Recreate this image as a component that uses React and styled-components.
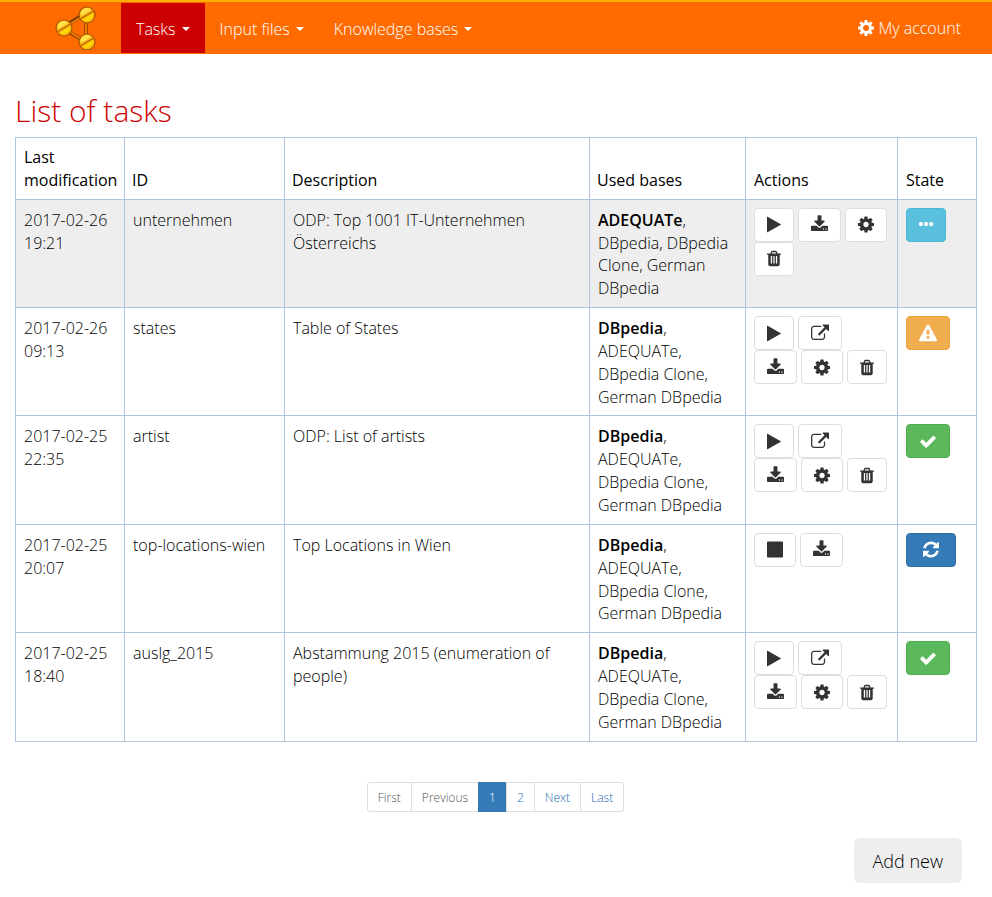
import React from "react";
import styled, { createGlobalStyle } from "styled-components";

const GlobalStyle = createGlobalStyle`
  *, *::before, *::after { box-sizing: border-box; }
  body {
    margin: 0;
    background: #fff;
    color: #000;
    font-family: "Open Sans", "Noto Sans", sans-serif;
    font-size: 16px;
    font-weight: 300;
    line-height: 1.428571;
  }
`;

/* Glyph drawings on a 1792-unit em square; `em` is the glyph's advance width. */
const ICONS = {
  play: {
    em: 1408,
    width: 14,
    d: "M1576 927l-1328 738q-23 13-39.5 3t-16.5-36v-1472q0-26 16.5-36t39.5 3l1328 738q23 13 23 31t-23 31z",
  },
  stop: {
    em: 1536,
    width: 16,
    d: "M1664 192v1408q0 26-19 45t-45 19h-1408q-26 0-45-19t-19-45v-1408q0-26 19-45t45-19h1408q26 0 45 19t19 45z",
  },
  download: {
    em: 1664,
    width: 17,
    d: "M1344 1344q0-26-19-45t-45-19-45 19-19 45 19 45 45 19 45-19 19-45zm256 0q0-26-19-45t-45-19-45 19-19 45 19 45 45 19 45-19 19-45zm128-224v320q0 40-28 68t-68 28h-1472q-40 0-68-28t-28-68v-320q0-40 28-68t68-28h465l135 136q58 56 136 56t136-56l136-136h464q40 0 68 28t28 68zm-325-569q17 41-14 70l-448 448q-18 19-45 19t-45-19l-448-448q-31-29-14-70 17-39 59-39h256v-448q0-26 19-45t45-19h256q26 0 45 19t19 45v448h256q42 0 59 39z",
  },
  cog: {
    em: 1536,
    width: 16,
    d: "M1152 896q0-106-75-181t-181-75-181 75-75 181 75 181 181 75 181-75 75-181zm512-109v222q0 12-8 23t-20 13l-185 28q-19 54-39 91 35 50 107 138 10 12 10 25t-9 23q-27 37-99 108t-94 71q-12 0-26-9l-138-108q-44 23-91 38-16 136-29 186-7 28-36 28h-222q-14 0-24.5-8.5t-11.5-21.5l-28-184q-49-16-90-37l-141 107q-10 9-25 9-14 0-25-11-126-114-165-168-7-10-7-23 0-12 8-23 15-21 51-66.5t54-70.5q-27-50-41-99l-183-27q-13-2-21-12.5t-8-23.5v-222q0-12 8-23t19-13l186-28q14-46 39-92-40-57-107-138-10-12-10-24 0-10 9-23 26-36 98.5-107.5t94.5-71.5q13 0 26 10l138 107q44-23 91-38 16-136 29-186 7-28 36-28h222q14 0 24.5 8.5t11.5 21.5l28 184q49 16 90 37l142-107q9-9 24-9 13 0 25 10 129 119 165 170 7 8 7 22 0 12-8 23-15 21-51 66.5t-54 70.5q26 50 41 98l183 28q13 2 21 12.5t8 23.5z",
  },
  trash: {
    em: 1408,
    width: 14,
    d: "M704 1376v-704q0-14-9-23t-23-9h-64q-14 0-23 9t-9 23v704q0 14 9 23t23 9h64q14 0 23-9t9-23zm256 0v-704q0-14-9-23t-23-9h-64q-14 0-23 9t-9 23v704q0 14 9 23t23 9h64q14 0 23-9t9-23zm256 0v-704q0-14-9-23t-23-9h-64q-14 0-23 9t-9 23v704q0 14 9 23t23 9h64q14 0 23-9t9-23zm-544-992h448l-48-117q-7-9-17-11h-317q-10 2-17 11zm928 32v64q0 14-9 23t-23 9h-96v948q0 83-47 143.5t-113 60.5h-832q-66 0-113-58.5t-47-141.5v-952h-96q-14 0-23-9t-9-23v-64q0-14 9-23t23-9h309l70-167q15-37 54-63t79-26h320q40 0 79 26t54 63l70 167h309q14 0 23 9t9 23z",
  },
  external: {
    em: 1792,
    width: 18,
    d: "M1408 928v320q0 119-84.5 203.5t-203.5 84.5h-832q-119 0-203.5-84.5t-84.5-203.5v-832q0-119 84.5-203.5t203.5-84.5h704q14 0 23 9t9 23v64q0 14-9 23t-23 9h-704q-66 0-113 47t-47 113v832q0 66 47 113t113 47h832q66 0 113-47t47-113v-320q0-14 9-23t23-9h64q14 0 23 9t9 23zm384-864v512q0 26-19 45t-45 19-45-19l-176-176-652 652q-10 10-23 10t-23-10l-114-114q-10-10-10-23t10-23l652-652-176-176q-19-19-19-45t19-45 45-19h512q26 0 45 19t19 45z",
  },
  ellipsis: {
    em: 1408,
    width: 14,
    d: "M576 800v96q0 100-60 134t-132 34-132-34-60-134v-96q0-90 60-124t132-34 132 34 60 124zm512 0v96q0 100-60 134t-132 34-132-34-60-134v-96q0-90 60-124t132-34 132 34 60 124zm512 0v96q0 100-60 134t-132 34-132-34-60-134v-96q0-90 60-124t132-34 132 34 60 124z",
  },
  warning: {
    em: 1792,
    width: 18,
    d: "M1024 1375v-190q0-14-9.5-23.5t-22.5-9.5h-192q-13 0-22.5 9.5t-9.5 23.5v190q0 14 9.5 23.5t22.5 9.5h192q13 0 22.5-9.5t9.5-23.5zm-2-374l18-459q0-12-10-19-13-11-24-11h-220q-11 0-24 11-10 7-10 21l17 457q0 10 10 16.5t24 6.5h185q14 0 23.5-6.5t10.5-16.5zm-14-934l768 1408q35 63-2 126-17 29-46.5 46t-63.5 17h-1536q-34 0-63.5-17t-46.5-46q-37-63-2-126l768-1408q17-31 47-49t65-18 65 18 47 49z",
  },
  check: {
    em: 1792,
    width: 18,
    d: "M1671 566q0 40-28 68l-724 724-136 136q-28 28-68 28t-68-28l-136-136-362-362q-28-28-28-68t28-68l136-136q28-28 68-28t68 28l294 295 656-657q28-28 68-28t68 28l136 136q28 28 28 68z",
  },
  refresh: {
    em: 2304,
    width: 24,
    d: "M1639 1056q0 5-1 7-64 268-268 434.5t-478 166.5q-146 0-282.5-55t-243.5-157l-129 129q-19 19-45 19t-45-19-19-45v-448q0-26 19-45t45-19h448q26 0 45 19t19 45-19 45l-137 137q71 66 161 102t187 36q134 0 250-65t186-179q11-17 53-117 8-23 30-23h192q13 0 22.5 9.5t9.5 22.5zm25-800v448q0 26-19 45t-45 19h-448q-26 0-45-19t-19-45 19-45l138-138q-148-137-349-137-134 0-250 65t-186 179q-11 17-53 117-8 23-30 23h-199q-13 0-22.5-9.5t-9.5-22.5v-7q65-268 270-434.5t480-166.5q146 0 284 55.5t245 156.5l130-129q19-19 45-19t45 19 19 45z",
  },
};

function Icon({ name }) {
  const { em, width, d } = ICONS[name];
  return (
    <svg
      width={width}
      height="19"
      viewBox={`${(1792 - em) / 2} 0 ${em} 1792`}
      fill="currentColor"
      overflow="visible"
      aria-hidden="true"
    >
      <path d={d} />
    </svg>
  );
}

const Navbar = styled.header`
  display: flex;
  align-items: flex-start;
  min-height: 54px;
  padding: 1px 16px 1px 55px;
  border-top: 2px solid #ffae00;
  background: #ff6b00;
`;

const Brand = styled.a`
  display: flex;
  margin: 2px 24px 0 0;
`;

const Menu = styled.nav`
  display: flex;
  flex: 1;
`;

const MenuButton = styled.button`
  display: flex;
  align-items: center;
  gap: 6px;
  height: 50px;
  padding: 2px 15px 0;
  border: 0;
  background: ${(p) => (p.$active ? "#c00" : "transparent")};
  color: #fff;
  font: inherit;
  cursor: pointer;
`;

const Caret = styled.span`
  border-top: 4px solid;
  border-right: 4px solid transparent;
  border-left: 4px solid transparent;
`;

const AccountLink = styled.a`
  display: flex;
  align-items: center;
  gap: 4px;
  height: 50px;
  padding: 0 15px;
  color: #fff;
  text-decoration: none;
`;

const Page = styled.main`
  padding: 40px 15px 14px;
`;

const Title = styled.h1`
  margin: 0 0 9px;
  color: #c00;
  font-size: 30px;
  font-weight: 300;
  line-height: 34px;
`;

const Table = styled.table`
  width: 100%;
  border-collapse: collapse;
  table-layout: fixed;
`;

const Col = styled.col`
  width: ${(p) => p.$width};
`;

const HeadCell = styled.th`
  padding: 8px 7px 7px;
  border: 1px solid #b0c4de;
  font-weight: 500;
  text-align: left;
  vertical-align: bottom;

  &:first-child,
  &:nth-child(n + 5) { padding-left: 8px; }
`;

const Row = styled.tr`
  background: ${(p) => (p.$highlighted ? "#eee" : "#fff")};
`;

const Cell = styled.td`
  padding: ${(p) => (p.$controls ? "8px" : "9px 8px 8px")};
  border: 1px solid #b0c4de;
  vertical-align: top;
  line-height: ${(p) => (p.$controls ? "20px" : "inherit")};
`;

const TextCell = styled(Cell)`
  padding: 9px 8px 7px;
`;

const MainBase = styled.strong`
  font-weight: 600;
`;

const ActionList = styled.div`
  display: flex;
  flex-wrap: wrap;
  column-gap: 4px;
  padding-right: 2px;
`;

const IconButton = styled.button`
  display: flex;
  align-items: center;
  height: 34px;
  padding: 0 12px;
  border: 1px solid ${(p) => p.$border || "#ddd"};
  border-radius: 4px;
  background: ${(p) => p.$fill || "#fff"};
  color: ${(p) => (p.$fill ? "#fff" : "#333")};
  cursor: pointer;
`;

const Pagination = styled.nav`
  display: flex;
  justify-content: center;
  margin-top: 40px;
`;

const PageLink = styled.a`
  height: 30px;
  margin-left: -1px;
  padding: 5px 10px;
  border: 1px solid ${(p) => (p.$active ? "#337ab7" : "#ddd")};
  background: ${(p) => (p.$active ? "#337ab7" : "#fff")};
  color: ${(p) => (p.$active ? "#fff" : p.$muted ? "#555" : "#1f6cb0")};
  font-size: 12px;
  line-height: 20px;
  text-decoration: none;

  &:first-child { border-radius: 3px 0 0 3px; }
  &:last-child { border-radius: 0 3px 3px 0; }
`;

const Footer = styled.div`
  display: flex;
  justify-content: flex-end;
  margin-top: 26px;
  padding-right: 15px;
`;

const AddButton = styled.button`
  height: 45px;
  padding: 3px 19px 0;
  border: 0;
  border-radius: 6px;
  background: #eee;
  color: #000;
  font: inherit;
  font-size: 18px;
  cursor: pointer;
`;

function Ball({ cx, cy }) {
  return (
    <g>
      <circle cx={cx} cy={cy} r="8" fill="#fdb515" stroke="#a85400" strokeWidth="1.2" />
      <path d={`M${cx - 6} ${cy + 1}a6 6 0 0 1 10-6z`} fill="#ffe24a" />
      <path d={`M${cx - 4} ${cy + 5}a7 7 0 0 0 10-7z`} fill="#ffd800" />
      <path d={`M${cx - 7} ${cy + 4}L${cx + 7} ${cy - 4}`} stroke="#b06200" strokeWidth="1.2" />
    </g>
  );
}

function Logo() {
  return (
    <svg width="42" height="46" viewBox="0 0 42 46" aria-hidden="true">
      <path d="M9 22L31 8V37L9 24z" fill="none" stroke="#a04a00" strokeWidth="4" />
      <path d="M9 21L31 8" stroke="#7a3c08" strokeWidth="3" />
      <path d="M9 23L31 9V37z" fill="none" stroke="#f07a00" strokeWidth="2" />
      <Ball cx={32} cy={10} />
      <Ball cx={9} cy={23} />
      <Ball cx={32} cy={37} />
    </svg>
  );
}

function AccountCog() {
  return (
    <svg width="16" height="16" viewBox="0 0 16 16" fill="none" stroke="#fff" aria-hidden="true">
      <circle cx="8" cy="8" r="4.500" strokeWidth="3" />
      <path
        d="M8 0v3M8 13v3M0 8h3M13 8h3M2.300 2.300l2.200 2.200M11.500 11.500l2.200 2.200M2.300 13.700l2.200-2.200M11.500 4.500l2.200-2.200"
        strokeWidth="3"
      />
    </svg>
  );
}

const ACTION_LABELS = {
  play: "Run",
  stop: "Stop",
  download: "Download",
  cog: "Configure",
  trash: "Delete",
  external: "Open result",
};

const STATES = {
  waiting: { icon: "ellipsis", label: "Waiting", fill: "#5bc0de", border: "#46b8da" },
  warning: { icon: "warning", label: "Warning", fill: "#f0ad4e", border: "#eea236" },
  done: { icon: "check", label: "Finished", fill: "#5cb85c", border: "#4cae4c" },
  running: { icon: "refresh", label: "Running", fill: "#337ab7", border: "#2e6da4" },
};

const FINISHED_ACTIONS = ["play", "external", "download", "cog", "trash"];
const DBPEDIA_REST = ", ADEQUATe, DBpedia Clone, German DBpedia";

const TASKS = [
  {
    modified: "2017-02-26 19:21",
    id: "unternehmen",
    description: "ODP: Top 1001 IT-Unternehmen Österreichs",
    base: "ADEQUATe",
    rest: ", DBpedia, DBpedia Clone, German DBpedia",
    actions: ["play", "download", "cog", "trash"],
    state: "waiting",
    highlighted: true,
  },
  {
    modified: "2017-02-26 09:13",
    id: "states",
    description: "Table of States",
    base: "DBpedia",
    rest: DBPEDIA_REST,
    actions: FINISHED_ACTIONS,
    state: "warning",
  },
  {
    modified: "2017-02-25 22:35",
    id: "artist",
    description: "ODP: List of artists",
    base: "DBpedia",
    rest: DBPEDIA_REST,
    actions: FINISHED_ACTIONS,
    state: "done",
  },
  {
    modified: "2017-02-25 20:07",
    id: "top-locations-wien",
    description: "Top Locations in Wien",
    base: "DBpedia",
    rest: DBPEDIA_REST,
    actions: ["stop", "download"],
    state: "running",
  },
  {
    modified: "2017-02-25 18:40",
    id: "auslg_2015",
    description: "Abstammung 2015 (enumeration of people)",
    base: "DBpedia",
    rest: DBPEDIA_REST,
    actions: FINISHED_ACTIONS,
    state: "done",
  },
];

const COLUMNS = [
  { title: "Last modification", width: "109px" },
  { title: "ID", width: "160px" },
  { title: "Description", width: "auto" },
  { title: "Used bases", width: "156px" },
  { title: "Actions", width: "152px" },
  { title: "State", width: "79px" },
];

const PAGES = [
  { label: "First", muted: true },
  { label: "Previous", muted: true },
  { label: "1", active: true },
  { label: "2" },
  { label: "Next" },
  { label: "Last" },
];

function TaskRow({ task }) {
  const state = STATES[task.state];
  return (
    <Row $highlighted={task.highlighted}>
      <TextCell>{task.modified}</TextCell>
      <TextCell>{task.id}</TextCell>
      <TextCell>{task.description}</TextCell>
      <TextCell>
        <MainBase>{task.base}</MainBase>
        {task.rest}
      </TextCell>
      <Cell $controls>
        <ActionList>
          {task.actions.map((name) => (
            <IconButton key={name} type="button" aria-label={ACTION_LABELS[name]}>
              <Icon name={name} />
            </IconButton>
          ))}
        </ActionList>
      </Cell>
      <Cell $controls>
        <IconButton type="button" aria-label={state.label} $fill={state.fill} $border={state.border}>
          <Icon name={state.icon} />
        </IconButton>
      </Cell>
    </Row>
  );
}

export default function App() {
  return (
    <>
      <GlobalStyle />
      <Navbar>
        <Brand href="#" aria-label="Home">
          <Logo />
        </Brand>
        <Menu>
          <MenuButton type="button" $active>
            Tasks <Caret />
          </MenuButton>
          <MenuButton type="button">
            Input files <Caret />
          </MenuButton>
          <MenuButton type="button">
            Knowledge bases <Caret />
          </MenuButton>
        </Menu>
        <AccountLink href="#account">
          <AccountCog />
          My account
        </AccountLink>
      </Navbar>
      <Page>
        <Title>List of tasks</Title>
        <Table>
          <colgroup>
            {COLUMNS.map((c) => (
              <Col key={c.title} $width={c.width} />
            ))}
          </colgroup>
          <thead>
            <tr>
              {COLUMNS.map((c) => (
                <HeadCell key={c.title} scope="col">
                  {c.title}
                </HeadCell>
              ))}
            </tr>
          </thead>
          <tbody>
            {TASKS.map((task) => (
              <TaskRow key={task.id} task={task} />
            ))}
          </tbody>
        </Table>
        <Pagination aria-label="Pages">
          {PAGES.map((p) => (
            <PageLink key={p.label} href="#page" $active={p.active} $muted={p.muted}>
              {p.label}
            </PageLink>
          ))}
        </Pagination>
        <Footer>
          <AddButton type="button">Add new</AddButton>
        </Footer>
      </Page>
    </>
  );
}
